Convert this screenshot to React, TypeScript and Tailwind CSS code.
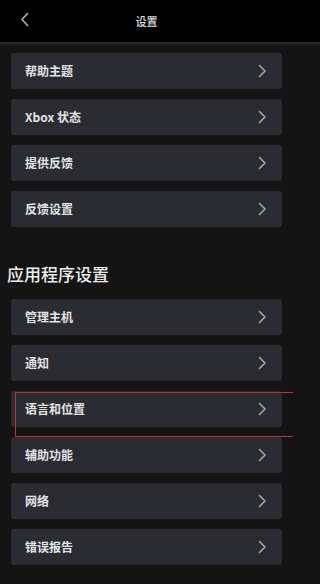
const topItems = ['帮助主题', 'Xbox 状态', '提供反馈', '反馈设置'];
const appItems = ['管理主机', '通知', '语言和位置', '辅助功能', '网络', '错误报告'];

function Chevron() {
  return (
    <svg width="9" height="14" viewBox="0 0 9 14" fill="none" className="shrink-0">
      <path d="M1.5 1.5L7 7l-5.5 5.5" stroke="#a3a5a9" strokeWidth="1.6" strokeLinecap="round" strokeLinejoin="round" />
    </svg>
  );
}

function Row({ label }: { label: string }) {
  return (
    <div className="flex h-[36px] items-center justify-between rounded-[3px] bg-[#2a2c31] pl-[14px] pr-[15px]">
      <span className="text-[12px] font-semibold text-[#e4e4e6]">{label}</span>
      <Chevron />
    </div>
  );
}

export default function App() {
  return (
    <div
      className="relative h-[584px] w-full min-w-[293px] overflow-hidden bg-[#141414]"
      style={{ fontFamily: '"Noto Sans CJK SC", "Noto Sans", sans-serif' }}
    >
      <div className="bg-black">
        <header className="relative flex h-[42px] w-[293px] items-center justify-center">
          <svg width="9" height="15" viewBox="0 0 9 15" fill="none" className="absolute left-[20px] top-[12px]">
            <path d="M7.5 1.5L2 7.5l5.5 6" stroke="#b0b0b0" strokeWidth="1.6" strokeLinecap="round" strokeLinejoin="round" />
          </svg>
          <span className="text-[11px] font-medium text-[#e0e0e0]">设置</span>
        </header>
      </div>
      <div className="h-[4px] bg-gradient-to-b from-[#303030] to-[#161616]" />

      <div className="w-[293px]">
        <div className="flex flex-col gap-[10px] px-[11px] pt-[7px]">
          {topItems.map((t) => (
            <Row key={t} label={t} />
          ))}
        </div>

        <h2 className="mt-[34px] h-[26px] pl-[7px] text-[17px] leading-[26px] font-medium text-[#ededed]">应用程序设置</h2>

        <div className="mt-[12px] flex flex-col gap-[10px] px-[11px]">
          {appItems.map((t) => (
            <Row key={t} label={t} />
          ))}
        </div>
      </div>

      <div className="pointer-events-none absolute left-[15px] top-[392px] h-[45px] w-[278px] border border-r-0 border-[#b8363a]" />
    </div>
  );
}
